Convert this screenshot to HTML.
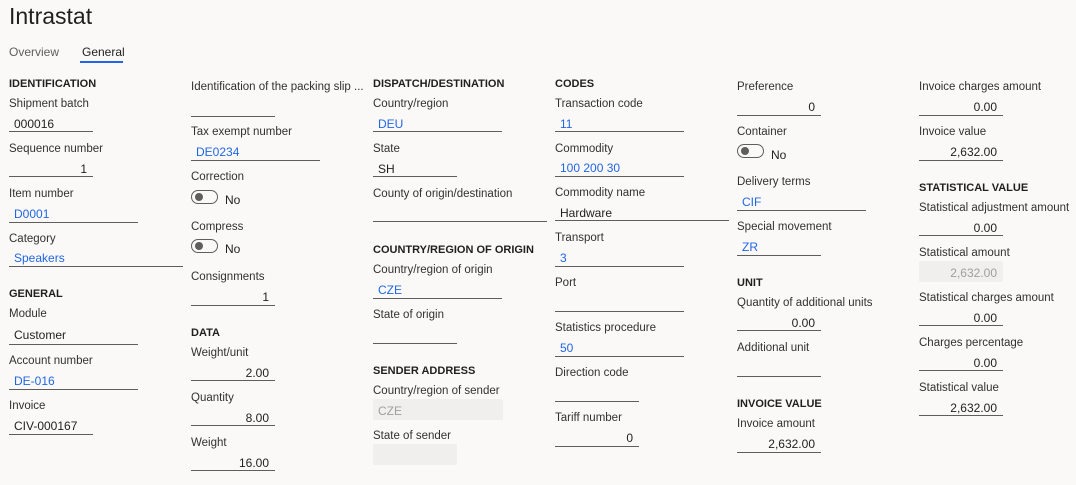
<!DOCTYPE html>
<html><head><meta charset="utf-8"><style>
body{margin:0;width:1076px;height:485px;background:#faf9f8;font-family:"Liberation Sans",sans-serif;color:#323130;position:relative;overflow:hidden}
.a{position:absolute;font-size:11.5px;line-height:14px;white-space:nowrap;transform:translateY(1px)}
.h{font-weight:bold;color:#201f1e;font-size:11px}
.v{color:#201f1e;font-size:12px}
.b{color:#2266e3;font-size:12px}
.u{position:absolute;height:1px;background:#605e5c}
.r{text-align:right}
.d{position:absolute;background:#f0efee;border-radius:2px}
.t{position:absolute;width:25px;height:12px;border:1px solid #605e5c;border-radius:7px}
.t::after{content:"";position:absolute;left:3px;top:2px;width:8px;height:8px;border-radius:50%;background:#605e5c}
</style></head><body>
<div class="a" style="left:9px;top:2px;font-size:23px;line-height:27px;color:#201f1e">Intrastat</div>
<div class="a" style="left:9px;top:44px;font-size:12px;color:#605e5c">Overview</div>
<div class="a" style="left:82px;top:44px;font-size:12px;color:#201f1e">General</div>
<div class="u" style="left:80px;width:43px;top:61px;height:2px;background:#2266e3"></div>

<!-- col1 -->
<div class="a h" style="left:9px;top:76px">IDENTIFICATION</div>
<div class="a" style="left:9px;top:96px">Shipment batch</div>
<div class="a v" style="left:14px;top:116px">000016</div><div class="u" style="left:9px;width:84px;top:131px"></div>
<div class="a" style="left:9px;top:141px">Sequence number</div>
<div class="a v r" style="left:9px;width:78px;top:161px">1</div><div class="u" style="left:9px;width:84px;top:176px"></div>
<div class="a" style="left:9px;top:186px">Item number</div>
<div class="a b" style="left:14px;top:206px">D0001</div><div class="u" style="left:9px;width:129px;top:222px"></div>
<div class="a" style="left:9px;top:231px">Category</div>
<div class="a b" style="left:14px;top:250px">Speakers</div><div class="u" style="left:9px;width:174px;top:266px"></div>
<div class="a h" style="left:9px;top:286px">GENERAL</div>
<div class="a" style="left:9px;top:306px">Module</div>
<div class="a v" style="left:14px;top:327px">Customer</div><div class="u" style="left:9px;width:129px;top:344px"></div>
<div class="a" style="left:9px;top:353px">Account number</div>
<div class="a b" style="left:14px;top:373px">DE-016</div><div class="u" style="left:9px;width:129px;top:389px"></div>
<div class="a" style="left:9px;top:398px">Invoice</div>
<div class="a v" style="left:14px;top:418px">CIV-000167</div><div class="u" style="left:9px;width:84px;top:434px"></div>

<!-- col2 -->
<div class="a" style="left:191px;top:79px">Identification of the packing slip ...</div>
<div class="u" style="left:191px;width:84px;top:116px"></div>
<div class="a" style="left:191px;top:124px">Tax exempt number</div>
<div class="a b" style="left:196px;top:144px">DE0234</div><div class="u" style="left:191px;width:129px;top:160px"></div>
<div class="a" style="left:191px;top:169px">Correction</div>
<div class="t" style="left:191px;top:190px"></div><div class="a v" style="left:225px;top:192px">No</div>
<div class="a" style="left:191px;top:219px">Compress</div>
<div class="t" style="left:191px;top:239px"></div><div class="a v" style="left:225px;top:241px">No</div>
<div class="a" style="left:191px;top:269px">Consignments</div>
<div class="a v r" style="left:191px;width:78px;top:289px">1</div><div class="u" style="left:191px;width:84px;top:305px"></div>
<div class="a h" style="left:191px;top:325px">DATA</div>
<div class="a" style="left:191px;top:345px">Weight/unit</div>
<div class="a v r" style="left:191px;width:78px;top:365px">2.00</div><div class="u" style="left:191px;width:84px;top:380px"></div>
<div class="a" style="left:191px;top:390px">Quantity</div>
<div class="a v r" style="left:191px;width:78px;top:410px">8.00</div><div class="u" style="left:191px;width:84px;top:425px"></div>
<div class="a" style="left:191px;top:435px">Weight</div>
<div class="a v r" style="left:191px;width:78px;top:455px">16.00</div><div class="u" style="left:191px;width:84px;top:470px"></div>

<!-- col3 -->
<div class="a h" style="left:373px;top:76px">DISPATCH/DESTINATION</div>
<div class="a" style="left:373px;top:96px">Country/region</div>
<div class="a b" style="left:378px;top:116px">DEU</div><div class="u" style="left:373px;width:129px;top:131px"></div>
<div class="a" style="left:373px;top:141px">State</div>
<div class="a v" style="left:378px;top:161px">SH</div><div class="u" style="left:373px;width:84px;top:176px"></div>
<div class="a" style="left:373px;top:186px">County of origin/destination</div>
<div class="u" style="left:373px;width:174px;top:221px"></div>
<div class="a h" style="left:373px;top:242px">COUNTRY/REGION OF ORIGIN</div>
<div class="a" style="left:373px;top:262px">Country/region of origin</div>
<div class="a b" style="left:378px;top:282px">CZE</div><div class="u" style="left:373px;width:129px;top:298px"></div>
<div class="a" style="left:373px;top:307px">State of origin</div>
<div class="u" style="left:373px;width:84px;top:343px"></div>
<div class="a h" style="left:373px;top:363px">SENDER ADDRESS</div>
<div class="a" style="left:373px;top:383px">Country/region of sender</div>
<div class="d" style="left:373px;width:130px;top:399px;height:21px"></div>
<div class="a" style="left:378px;top:403px;color:#a19f9d;font-size:12px">CZE</div>
<div class="a" style="left:373px;top:428px">State of sender</div>
<div class="d" style="left:373px;width:84px;top:444px;height:21px"></div>

<!-- col4 -->
<div class="a h" style="left:555px;top:76px">CODES</div>
<div class="a" style="left:555px;top:96px">Transaction code</div>
<div class="a b" style="left:560px;top:116px">11</div><div class="u" style="left:555px;width:129px;top:131px"></div>
<div class="a" style="left:555px;top:141px">Commodity</div>
<div class="a b" style="left:560px;top:160px">100 200 30</div><div class="u" style="left:555px;width:129px;top:176px"></div>
<div class="a" style="left:555px;top:185px">Commodity name</div>
<div class="a v" style="left:560px;top:205px">Hardware</div><div class="u" style="left:555px;width:174px;top:220px"></div>
<div class="a" style="left:555px;top:230px">Transport</div>
<div class="a b" style="left:560px;top:250px">3</div><div class="u" style="left:555px;width:129px;top:266px"></div>
<div class="a" style="left:555px;top:275px">Port</div>
<div class="u" style="left:555px;width:129px;top:311px"></div>
<div class="a" style="left:555px;top:320px">Statistics procedure</div>
<div class="a b" style="left:560px;top:340px">50</div><div class="u" style="left:555px;width:129px;top:356px"></div>
<div class="a" style="left:555px;top:365px">Direction code</div>
<div class="u" style="left:555px;width:84px;top:401px"></div>
<div class="a" style="left:555px;top:410px">Tariff number</div>
<div class="a v r" style="left:555px;width:78px;top:430px">0</div><div class="u" style="left:555px;width:84px;top:446px"></div>

<!-- col5 -->
<div class="a" style="left:737px;top:79px">Preference</div>
<div class="a v r" style="left:737px;width:78px;top:99px">0</div><div class="u" style="left:737px;width:84px;top:115px"></div>
<div class="a" style="left:737px;top:124px">Container</div>
<div class="t" style="left:737px;top:144px"></div><div class="a v" style="left:771px;top:147px">No</div>
<div class="a" style="left:737px;top:174px">Delivery terms</div>
<div class="a b" style="left:742px;top:194px">CIF</div><div class="u" style="left:737px;width:129px;top:210px"></div>
<div class="a" style="left:737px;top:219px">Special movement</div>
<div class="a b" style="left:742px;top:239px">ZR</div><div class="u" style="left:737px;width:84px;top:255px"></div>
<div class="a h" style="left:737px;top:275px">UNIT</div>
<div class="a" style="left:737px;top:295px">Quantity of additional units</div>
<div class="a v r" style="left:737px;width:78px;top:315px">0.00</div><div class="u" style="left:737px;width:84px;top:330px"></div>
<div class="a" style="left:737px;top:340px">Additional unit</div>
<div class="u" style="left:737px;width:84px;top:376px"></div>
<div class="a h" style="left:737px;top:396px">INVOICE VALUE</div>
<div class="a" style="left:737px;top:416px">Invoice amount</div>
<div class="a v r" style="left:737px;width:78px;top:436px">2,632.00</div><div class="u" style="left:737px;width:84px;top:452px"></div>

<!-- col6 -->
<div class="a" style="left:919px;top:79px">Invoice charges amount</div>
<div class="a v r" style="left:919px;width:78px;top:99px">0.00</div><div class="u" style="left:919px;width:84px;top:115px"></div>
<div class="a" style="left:919px;top:124px">Invoice value</div>
<div class="a v r" style="left:919px;width:78px;top:144px">2,632.00</div><div class="u" style="left:919px;width:84px;top:160px"></div>
<div class="a h" style="left:919px;top:180px">STATISTICAL VALUE</div>
<div class="a" style="left:919px;top:200px">Statistical adjustment amount</div>
<div class="a v r" style="left:919px;width:78px;top:220px">0.00</div><div class="u" style="left:919px;width:84px;top:235px"></div>
<div class="a" style="left:919px;top:245px">Statistical amount</div>
<div class="d" style="left:919px;width:84px;top:261px;height:21px"></div>
<div class="a r" style="left:919px;width:78px;top:265px;color:#a19f9d;font-size:12px">2,632.00</div>
<div class="a" style="left:919px;top:290px">Statistical charges amount</div>
<div class="a v r" style="left:919px;width:78px;top:310px">0.00</div><div class="u" style="left:919px;width:84px;top:325px"></div>
<div class="a" style="left:919px;top:335px">Charges percentage</div>
<div class="a v r" style="left:919px;width:78px;top:355px">0.00</div><div class="u" style="left:919px;width:84px;top:370px"></div>
<div class="a" style="left:919px;top:380px">Statistical value</div>
<div class="a v r" style="left:919px;width:78px;top:400px">2,632.00</div><div class="u" style="left:919px;width:84px;top:415px"></div>
</body></html>
